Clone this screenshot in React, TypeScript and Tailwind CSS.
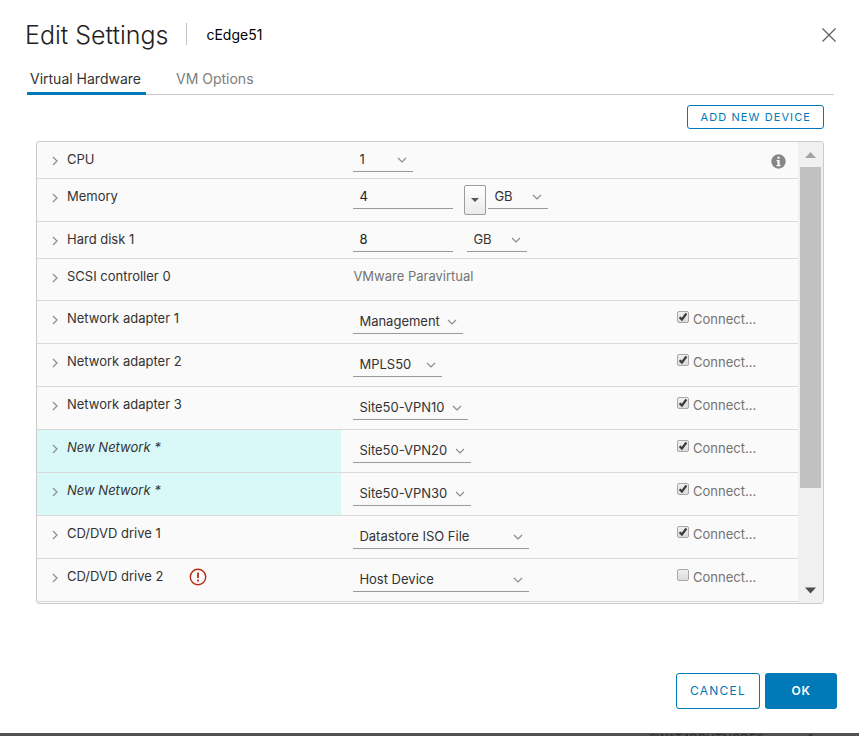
import { useState } from "react";
import type { ReactNode } from "react";

function Chevron({ className }: { className: string }) {
  return (
    <svg className={className} viewBox="0 0 10 10" fill="none" stroke="currentColor" strokeWidth="1.2" aria-hidden="true">
      <path d="M1 3l4 4 4-4" />
    </svg>
  );
}

function LineSelect({ id, label, value, width }: { id: string; label: string; value: string; width: string }) {
  return (
    <div className={`relative h-6 ${width}`}>
      <select
        id={id}
        aria-label={label}
        defaultValue={value}
        className="block h-6 w-full appearance-none rounded-none border-b border-[#9a9a9a] bg-transparent pb-0.5 pl-1.5 text-[13px] leading-5 text-[#333] outline-none"
      >
        <option>{value}</option>
      </select>
      <Chevron className="pointer-events-none absolute right-1.5 top-[7px] size-2.5 text-[#8c8c8c]" />
    </div>
  );
}

function LineInput({ label, value }: { label: string; value: string }) {
  return (
    <input
      aria-label={label}
      defaultValue={value}
      className="block h-6 w-[100px] rounded-none border-b border-[#9a9a9a] bg-transparent pb-0.5 pl-1.5 text-[13px] leading-5 text-[#222] outline-none"
    />
  );
}

function Connect({ id, initial }: { id: string; initial: boolean }) {
  const [on, setOn] = useState(initial);
  return (
    <div className="flex w-[121px] shrink-0 items-start pt-2">
      <span className="relative mt-0.5 size-3">
        <input
          id={id}
          type="checkbox"
          checked={on}
          onChange={() => setOn(!on)}
          className="block size-3 appearance-none rounded-xs border border-[#a8a8a8] bg-linear-to-b from-[#f0f0f0] to-[#dcdcdc]"
        />
        {on && (
          <svg className="pointer-events-none absolute inset-0 size-3" viewBox="0 0 12 12" fill="none" stroke="#3c3c3c" strokeWidth="2.2" aria-hidden="true">
            <path d="M2.6 6.2l2.3 2.3 4.5-6" />
          </svg>
        )}
      </span>
      <label htmlFor={id} className="pl-1 text-[13px] leading-5 text-[#737373]">
        Connect...
      </label>
    </div>
  );
}

type RowProps = {
  name: string;
  children: ReactNode;
  aside?: ReactNode;
  isNew?: boolean;
  warn?: boolean;
  pad?: string;
};

function Row({ name, children, aside, isNew, warn, pad = "py-1.5" }: RowProps) {
  return (
    <div className="flex border-b border-[#d9d9d9]">
      <div className={`flex w-[40%] shrink-0 items-start pl-[13px] pt-[7px] ${isNew ? "bg-[#d9f9f8]" : ""}`}>
        <button type="button" aria-label={`Expand ${name}`} className="flex h-6 w-[17px] items-center">
          <Chevron className="size-2.5 -rotate-90 text-[#8c8c8c]" />
        </button>
        <span className={`text-[13px] leading-5 text-[#333] ${isNew ? "italic" : ""}`}>{name}</span>
        {warn && (
          <svg className="ml-[26px] mt-0.5 size-[18px]" viewBox="0 0 18 18" fill="none" stroke="#b52a10" role="img" aria-label="Warning">
            <circle cx="9" cy="9" r="7.7" strokeWidth="1.4" />
            <path d="M9 4.6v5.4M9 11.6v1.8" strokeWidth="1.8" />
          </svg>
        )}
      </div>
      <div className={`flex min-w-0 flex-1 items-start pl-3 ${pad}`}>{children}</div>
      {aside}
    </div>
  );
}

const networks = [
  { id: "net1", name: "Network adapter 1", value: "Management", width: "w-[110px]", isNew: false, on: true },
  { id: "net2", name: "Network adapter 2", value: "MPLS50", width: "w-[89px]", isNew: false, on: true },
  { id: "net3", name: "Network adapter 3", value: "Site50-VPN10", width: "w-[115px]", isNew: false, on: true },
  { id: "net4", name: "New Network *", value: "Site50-VPN20", width: "w-[118px]", isNew: true, on: true },
  { id: "net5", name: "New Network *", value: "Site50-VPN30", width: "w-[118px]", isNew: true, on: true },
  { id: "cd1", name: "CD/DVD drive 1", value: "Datastore ISO File", width: "w-[176px]", isNew: false, on: true },
  { id: "cd2", name: "CD/DVD drive 2", value: "Host Device", width: "w-[176px]", isNew: false, on: false },
];

export default function App() {
  return (
    <div className="flex min-h-screen flex-col bg-white font-['Inter','Open_Sans',sans-serif] text-[#333]">
      <main className="flex flex-1 flex-col">
        <header className="flex items-center pl-[25px] pr-[22px] pt-[21px]">
          <h1 className="text-[25px] leading-7 font-light text-[#222]">Edit Settings</h1>
          <span className="ml-[18px] mt-0.5 h-[22px] w-px self-start bg-[#c4c4c4]" />
          <h2 className="ml-[19px] text-sm leading-7 text-black">cEdge51</h2>
          <button type="button" aria-label="Close" className="ml-auto">
            <svg className="size-4" viewBox="0 0 16 16" fill="none" stroke="#5f5f5f" strokeWidth="1.3" aria-hidden="true">
              <path d="M1.5 1.5l13 13M14.5 1.5l-13 13" />
            </svg>
          </button>
        </header>

        <nav className="mx-[27px] mr-[25px] mt-[18px] flex h-7 items-stretch gap-[27px] border-b border-[#c9c9c9]" role="tablist">
          <button type="button" role="tab" aria-selected="true" className="-mb-px border-b-3 border-[#0079b8] pl-[3px] pr-[5px] pb-0.5 text-sm leading-5 text-[#333]">
            Virtual Hardware
          </button>
          <button type="button" role="tab" aria-selected="false" className="px-[3px] pb-1 text-sm leading-5 text-[#7d7d7d]">
            VM Options
          </button>
        </nav>

        <section className="mx-9 mr-[35px] flex flex-col items-end">
          <button type="button" className="mt-2.5 h-6 rounded-[3px] border border-[#0079b8] px-3 text-[11px] leading-5 tracking-widest text-[#0079b8]">
            ADD NEW DEVICE
          </button>

          <div className="mt-3 flex w-full overflow-hidden rounded-[3px] border border-[#ccc] bg-[#fafafa]">
            <div className="min-w-0 flex-1 pb-px">
              <Row
                name="CPU"
                aside={
                  <svg className="mr-3 mt-3 size-[15px] shrink-0" viewBox="0 0 15 15" role="img" aria-label="Information">
                    <circle cx="7.5" cy="7.5" r="7.2" fill="#868686" />
                    <path d="M6.5 2.7h2.1v2H6.5zM5.6 6h3v5h1v1.3H5.5V11h1V7.2h-.9z" fill="#fff" />
                  </svg>
                }
              >
                <LineSelect id="cpu" label="CPU" value="1" width="w-[60px]" />
              </Row>
              <Row name="Memory">
                <LineInput label="Memory" value="4" />
                <button
                  type="button"
                  aria-label="Memory sizes"
                  className="ml-[11px] mr-0.5 flex h-[30px] w-[22px] items-center justify-center rounded-xs border border-[#9c9c9c] bg-linear-to-b from-white to-[#ebebeb]"
                >
                  <svg className="size-2" viewBox="0 0 8 8" aria-hidden="true">
                    <path d="M0 2h8L4 6z" fill="#555" />
                  </svg>
                </button>
                <LineSelect id="memory-unit" label="Memory unit" value="GB" width="w-[60px]" />
              </Row>
              <Row name="Hard disk 1">
                <div className="flex gap-3.5">
                  <LineInput label="Hard disk 1" value="8" />
                  <LineSelect id="disk-unit" label="Hard disk unit" value="GB" width="w-[60px]" />
                </div>
              </Row>
              <Row name="SCSI controller 0" pad="pt-[7px] pb-3.5">
                <span className="text-[13px] leading-5 text-[#737373]">VMware Paravirtual</span>
              </Row>
              {networks.map((n) => (
                <Row
                  key={n.id}
                  name={n.name}
                  isNew={n.isNew}
                  warn={n.id === "cd2"}
                  pad="py-[9px]"
                  aside={<Connect id={`${n.id}-connect`} initial={n.on} />}
                >
                  <LineSelect id={n.id} label={n.name} value={n.value} width={n.width} />
                </Row>
              ))}
            </div>

            <div className="flex w-[25px] shrink-0 flex-col items-center bg-[#f0f0f0] pr-px" aria-hidden="true">
              <svg className="my-[7px] h-[11px] w-[11px]" viewBox="0 0 11 11">
                <path d="M0 9L5.5 3 11 9z" fill="#a3a3a3" />
              </svg>
              <div className="flex w-full flex-1 flex-col pl-0.5 pr-px">
                <div className="h-[78%] bg-[#c1c1c1]" />
              </div>
              <svg className="my-[7px] h-[11px] w-[11px]" viewBox="0 0 11 11">
                <path d="M0 2.5L5.5 8.5 11 2.5z" fill="#4d4d4d" />
              </svg>
            </div>
          </div>
        </section>

        <footer className="mt-auto flex justify-end gap-[5px] pb-6 pr-[22px]">
          <button type="button" className="h-9 min-w-[84px] rounded-[3px] border border-[#0079b8] px-3 text-xs leading-5 tracking-widest text-[#0079b8]">
            CANCEL
          </button>
          <button type="button" className="h-9 min-w-[72px] rounded-[3px] bg-[#0079b8] px-3 text-xs leading-5 font-semibold tracking-wider text-white">
            OK
          </button>
        </footer>
      </main>
      <div className="flex h-[3px] items-start justify-end gap-11 overflow-hidden bg-[#535153] pr-[26px] text-xs leading-3 text-[#2c2b2c]">
        <span>SWAT4DRUTNCDES</span>
        <span>1 ms</span>
      </div>
    </div>
  );
}
